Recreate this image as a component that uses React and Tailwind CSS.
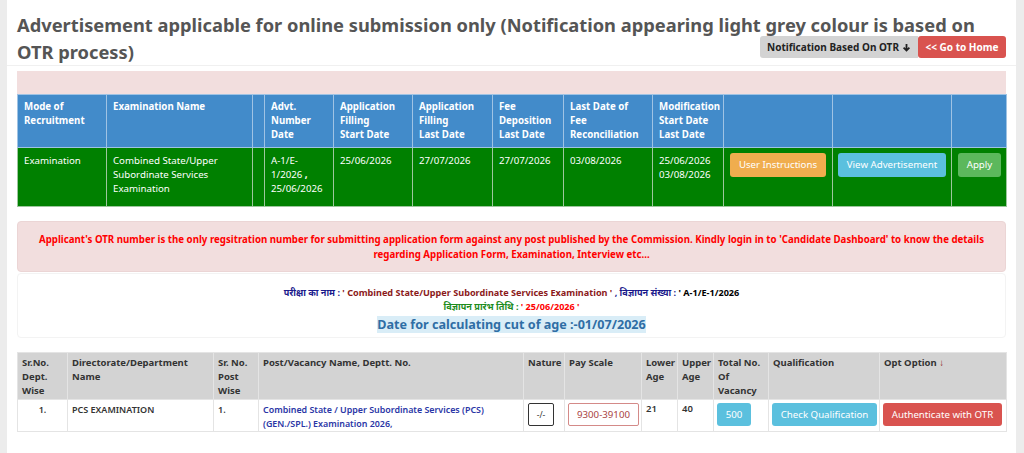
import React from "react";

const topCols = [89, 146, 12, 69, 79, 80, 71, 89, 71, 109, 119, 55];
const lowCols = [50, 146, 45, 265, 41, 77, 36, 36, 55, 111, 127];

function Btn({ className, children }) {
  return (
    <span
      className={`inline-flex items-center justify-center whitespace-nowrap rounded-[3px] text-[9.7px] text-white ${className}`}
    >
      {children}
    </span>
  );
}

export default function App() {
  return (
    <div
      className="flex min-h-[453px] bg-[#ececec] text-[#333]"
      style={{ fontFamily: '"Noto Sans", "Open Sans", sans-serif' }}
    >
      <div className="w-[7px] shrink-0" />
      <main className="w-[1009px] shrink-0 bg-white pb-[22px]">
        {/* Heading */}
        <div className="border-b border-[#f0f0f0] pt-[11px]">
          <div className="whitespace-nowrap px-[10px] text-[18.3px] font-bold leading-[27px] text-[#555]">
            Advertisement applicable for online submission only (Notification appearing light grey colour is based on
          </div>
          <div className="flex h-[27px] items-start justify-between px-[10px]">
            <span className="text-[18.3px] font-bold leading-[27px] text-[#555]">OTR process)</span>
            <div className="-mt-[2px] flex">
              <span className="flex h-[22px] w-[158px] items-center justify-center rounded-l-[3px] bg-[#d3d3d3] text-[10px] font-bold text-[#222]">
                Notification Based On OTR
                <svg width="9" height="9" viewBox="0 0 10 10" className="ml-[3px]">
                  <path d="M5 1v7M1.8 5.2L5 8.4l3.2-3.2" stroke="#222" strokeWidth="2" fill="none" />
                </svg>
              </span>
              <span className="flex h-[22px] w-[88px] items-center justify-center rounded-[3px] bg-[#d9534f] text-[10px] font-bold text-white">
                &lt;&lt; Go to Home
              </span>
            </div>
          </div>
        </div>

        <div className="px-[10px]">
          <div className="mt-[5px] h-[23px] bg-[#f2dede]" />

          {/* Notification table */}
          <table className="w-[989px] table-fixed border-collapse text-[9.7px] leading-[14px] text-white">
            <colgroup>
              {topCols.map((w, i) => (
                <col key={i} style={{ width: w }} />
              ))}
            </colgroup>
            <thead>
              <tr className="h-[53px] bg-[#428bca] align-top">
                {[
                  ["Mode of", "Recruitment"],
                  ["Examination Name"],
                  [],
                  ["Advt.", "Number", "Date"],
                  ["Application", "Filling", "Start Date"],
                  ["Application", "Filling", "Last Date"],
                  ["Fee", "Deposition", "Last Date"],
                  ["Last Date of", "Fee", "Reconciliation"],
                  ["Modification", "Start Date", "Last Date"],
                  [],
                  [],
                  [],
                ].map((lines, i) => (
                  <th key={i} className="border border-[#9fc3e4] px-[6px] py-[5px] text-left font-bold">
                    {lines.map((l, j) => (
                      <div key={j}>{l}</div>
                    ))}
                  </th>
                ))}
              </tr>
            </thead>
            <tbody>
              <tr className="h-[59px] bg-[#008000] align-top">
                <td className="border border-[#9dc79d] px-[6px] pt-[6px]">Examination</td>
                <td className="border border-[#9dc79d] px-[6px] pt-[6px]">
                  Combined State/Upper Subordinate Services Examination
                </td>
                <td className="border border-[#9dc79d]" />
                <td className="border border-[#9dc79d] px-[6px] pt-[6px]">
                  A-1/E-
                  <br />
                  1/2026 <b>,</b>
                  <br />
                  25/06/2026
                </td>
                <td className="border border-[#9dc79d] px-[6px] pt-[6px]">25/06/2026</td>
                <td className="border border-[#9dc79d] px-[6px] pt-[6px]">27/07/2026</td>
                <td className="border border-[#9dc79d] px-[6px] pt-[6px]">27/07/2026</td>
                <td className="border border-[#9dc79d] px-[6px] pt-[6px]">03/08/2026</td>
                <td className="border border-[#9dc79d] px-[6px] pt-[6px]">
                  25/06/2026
                  <br />
                  03/08/2026
                </td>
                <td className="border border-[#9dc79d] pl-[6px] pt-[5px]">
                  <Btn className="h-[24px] w-[96px] bg-[#f0ad4e]">User Instructions</Btn>
                </td>
                <td className="border border-[#9dc79d] pl-[5px] pt-[5px]">
                  <Btn className="h-[24px] w-[108px] bg-[#5bc0de]">View Advertisement</Btn>
                </td>
                <td className="border border-[#9dc79d] pl-[6px] pt-[5px]">
                  <Btn className="h-[24px] w-[43px] bg-[#5cb85c]">Apply</Btn>
                </td>
              </tr>
            </tbody>
          </table>

          {/* Alert */}
          <div className="mt-[14px] rounded-[4px] border border-[#ebd5d5] bg-[#f2dede] px-[10px] pb-[9px] pt-[10px] text-center text-[9.7px] font-bold leading-[15px] text-[#f00]">
            Applicant's OTR number is the only regsitration number for submitting application form against any post
            published by the Commission. Kindly login in to 'Candidate Dashboard' to know the details regarding
            Application Form, Examination, Interview etc...
          </div>

          {/* Exam info */}
          <div className="mt-px rounded-[4px] border border-[#f3f3f3] pb-[5px] pt-[12px] text-center">
            <div className="h-[14px] text-[9.1px] font-bold leading-[14px]">
              <span className="text-[#1a1a8c]">परीक्षा का नाम : </span>
              <span className="text-[#8b1a1a]">' Combined State/Upper Subordinate Services Examination '</span>
              <span className="text-[#1a1a8c]"> , विज्ञापन संख्या : </span>
              <span className="text-black">' A-1/E-1/2026</span>
            </div>
            <div className="h-[14px] text-[9.1px] font-bold leading-[14px]">
              <span className="text-[#1c8c1c]">विज्ञापन प्रारंभ तिथि : </span>
              <span className="text-[#f00]">' 25/06/2026 '</span>
            </div>
            <div className="h-[18px] leading-[18px]">
              <span className="bg-[#d9edf7] text-[12.6px] font-bold leading-[18px] text-[#2f6ea5]">
                Date for calculating cut of age :-01/07/2026
              </span>
            </div>
          </div>

          {/* Post table */}
          <table className="mt-[14px] w-[989px] table-fixed border-collapse text-[9.5px] leading-[14px] text-[#333]">
            <colgroup>
              {lowCols.map((w, i) => (
                <col key={i} style={{ width: w }} />
              ))}
            </colgroup>
            <thead>
              <tr className="h-[47px] bg-[#d3d3d3] align-top">
                {[
                  "Sr.No. Dept. Wise",
                  "Directorate/Department Name",
                  "Sr. No. Post Wise",
                  "Post/Vacancy Name, Deptt. No.",
                  "Nature",
                  "Pay Scale",
                  "Lower Age",
                  "Upper Age",
                  "Total No. Of Vacancy",
                  "Qualification",
                ].map((t, i) => (
                  <th key={i} className="border border-[#e4e4e4] px-[4px] pt-[3px] text-left font-bold">
                    {t}
                  </th>
                ))}
                <th className="border border-[#e4e4e4] px-[4px] pt-[3px] text-left font-bold">
                  Opt Option <span className="font-normal text-[#8b1a1a]">↓</span>
                </th>
              </tr>
            </thead>
            <tbody>
              <tr className="h-[32px] align-top">
                <td className="border border-[#e4e4e4] px-[4px] pt-[3px] text-center text-[9px] font-semibold">1.</td>
                <td className="border border-[#e4e4e4] px-[4px] pt-[3px] text-[9px] font-semibold">PCS EXAMINATION</td>
                <td className="border border-[#e4e4e4] px-[4px] pt-[3px] text-[9px] font-semibold">1.</td>
                <td className="border border-[#e4e4e4] px-[4px] pt-[3px] text-[8.9px] font-semibold text-[#2a36a6]">
                  Combined State / Upper Subordinate Services (PCS) (GEN./SPL.) Examination 2026,
                </td>
                <td className="border border-[#e4e4e4] px-[4px] pt-[3px]">
                  <span className="flex h-[23px] w-[26px] items-center justify-center rounded-[2px] border border-[#333] text-[8.5px]">
                    -/-
                  </span>
                </td>
                <td className="border border-[#e4e4e4] px-[3px] pt-[3px]">
                  <span className="flex h-[23px] w-[71px] items-center justify-center rounded-[2px] border border-[#d48a88] text-[9.7px] text-[#a94442]">
                    9300-39100
                  </span>
                </td>
                <td className="border border-[#e4e4e4] px-[4px] pt-[2px] font-semibold">21</td>
                <td className="border border-[#e4e4e4] px-[4px] pt-[2px] font-semibold">40</td>
                <td className="border border-[#e4e4e4] px-[3px] pt-[3px]">
                  <Btn className="h-[23px] w-[34px] bg-[#5bc0de]">500</Btn>
                </td>
                <td className="border border-[#e4e4e4] px-[3px] pt-[3px]">
                  <Btn className="h-[23px] w-[105px] bg-[#5bc0de]">Check Qualification</Btn>
                </td>
                <td className="border border-[#e4e4e4] px-[3px] pt-[3px]">
                  <Btn className="h-[23px] w-[119px] bg-[#d9534f]">Authenticate with OTR</Btn>
                </td>
              </tr>
            </tbody>
          </table>
        </div>
      </main>
      <div className="flex-1" />
    </div>
  );
}
